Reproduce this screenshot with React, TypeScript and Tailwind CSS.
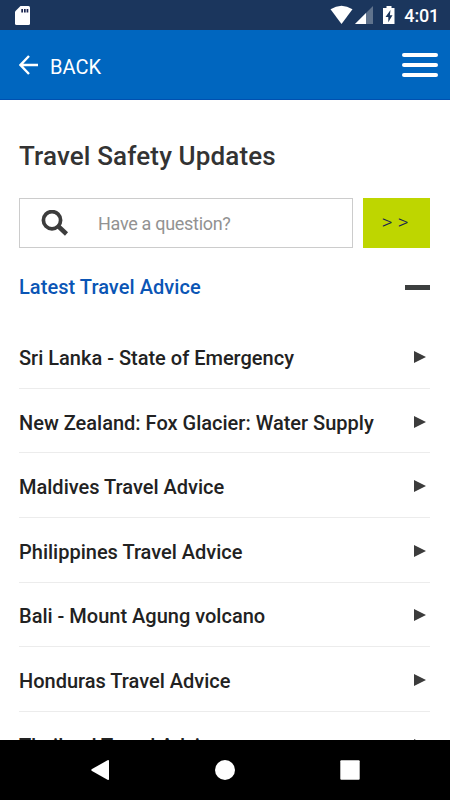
const adviceItems = [
  "Sri Lanka - State of Emergency",
  "New Zealand: Fox Glacier: Water Supply",
  "Maldives Travel Advice",
  "Philippines Travel Advice",
  "Bali - Mount Agung volcano",
  "Honduras Travel Advice",
  "Thailand Travel Advice",
];

function StatusBar() {
  return (
    <div className="flex h-[30px] shrink-0 items-center justify-between bg-[#1b365d] pl-[15px] pr-[11px] text-white">
      <svg width="15" height="19" viewBox="0 0 15 19">
        <path d="M5.5 0H13.5Q15 0 15 1.5V17.5Q15 19 13.5 19H1.5Q0 19 0 17.5V5.5Z" fill="#fff" />
        <path d="M6.3 3h1.7v3.5H6.3zM9 3h1.7v3.5H9zM11.6 3h1.7v3.5h-1.7z" fill="#1b2550" />
      </svg>
      <div className="flex items-center">
        <svg width="68" height="20" viewBox="0 0 68 20">
          <path d="M1.5 4.2Q12.5-2.8 23.5 4.2L12.5 19Z" fill="#fff" />
          <path d="M44 1V19H26Z" fill="#60738d" />
          <path d="M37 8V19H26Z" fill="#fff" />
          <path
            d="M57.5 1H62.5V3H65.5V19H54V3H57.5ZM61.5 5L56.5 12H59.3V17.2L63.500 10.3H60.9Z"
            fill="#fff"
            fillRule="evenodd"
          />
        </svg>
        <span className="ml-[7px] pt-px text-[18px] leading-[30px] font-medium tracking-[-0.2px]">4:01</span>
      </div>
    </div>
  );
}

function Header() {
  return (
    <header className="flex h-[70px] shrink-0 items-center justify-between border-b border-[#0050b0] bg-[#0066bf] pl-[19px] pr-3 text-white">
      <button className="flex items-center">
        <svg width="20" height="20" viewBox="0 0 20 20" fill="none" stroke="#fff" strokeWidth="2.4">
          <path d="M19 10H1.500M10 1L1.500 10L10 19" />
        </svg>
        <span className="ml-[11px] pt-[5px] text-[20px] leading-6">BACK</span>
      </button>
      <button className="flex flex-col gap-[6px]" aria-label="Menu">
        <span className="h-1 w-9 rounded-full bg-white" />
        <span className="h-1 w-9 rounded-full bg-white" />
        <span className="h-1 w-9 rounded-full bg-white" />
      </button>
    </header>
  );
}

function SearchForm() {
  return (
    <div className="mt-[26px] flex h-[50px] gap-[10px]">
      <div className="flex flex-1 items-center border border-[#cccccc] pl-[21px]">
        <svg width="28" height="26" viewBox="0 0 28 26" fill="none" stroke="#3c3c3c">
          <circle cx="11" cy="10.2" r="8.6" strokeWidth="3.7" />
          <path d="M17 16L25.5 24" strokeWidth="4.5" />
        </svg>
        <span className="ml-[29px] text-[18px] tracking-[-0.3px] text-[#929292]">Have a question?</span>
      </div>
      <button className="w-[67px] bg-[#bed600] pr-[3px] text-[21px] font-light text-[#1b2550]">&gt; &gt;</button>
    </div>
  );
}

function AdviceRow({ title }: { title: string }) {
  return (
    <li className="flex h-[64.6px] shrink-0 items-center justify-between border-b border-[#ececec] pr-1 text-[20px] font-medium text-[#222]">
      <span className="pt-[4px]">{title}</span>
      <svg width="12" height="12" viewBox="0 0 12 12" className="mt-[2px]">
        <path d="M0 0L12 6L0 12Z" fill="#3c3c3c" />
      </svg>
    </li>
  );
}

function NavigationBar() {
  return (
    <nav className="flex h-[60px] shrink-0 items-center bg-black pl-[91px]">
      <svg width="269" height="20" viewBox="0 0 269 20" fill="#fff">
        <path d="M16.5 .3Q18 -.5 18 1V19Q18 20.5 16.5 19.7L1 11Q-.5 10 1 9Z" />
        <circle cx="134" cy="10" r="10" />
        <rect x="249.3" y=".3" width="19.4" height="19.4" rx="1" />
      </svg>
    </nav>
  );
}

export default function App() {
  return (
    <div className="flex h-[800px] w-[450px] flex-col overflow-hidden bg-white font-['Roboto',sans-serif]">
      <StatusBar />
      <Header />
      <main className="min-h-0 flex-1 overflow-hidden pl-[19px] pr-5">
        <h1 className="mt-10 text-[26px] leading-8 font-medium tracking-[0.14px] text-[#333]">
          Travel Safety Updates
        </h1>
        <SearchForm />
        <div className="mt-[23px] flex h-8 items-center justify-between">
          <h2 className="text-[20px] font-medium tracking-[0.06px] text-[#0a55b5]">Latest Travel Advice</h2>
          <span className="h-[5px] w-[25px] bg-[#3c3f3f]" />
        </div>
        <ul className="mt-[21.2px]">
          {adviceItems.map((title) => (
            <AdviceRow key={title} title={title} />
          ))}
        </ul>
      </main>
      <NavigationBar />
    </div>
  );
}
